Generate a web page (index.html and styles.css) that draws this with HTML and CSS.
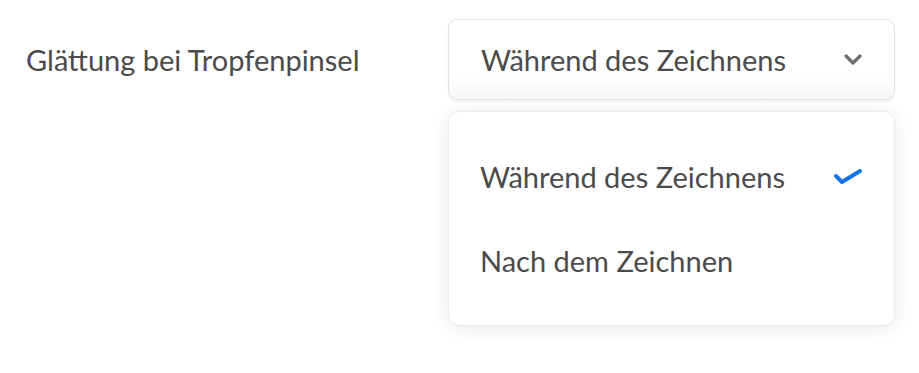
FILE: index.html
```html
<!DOCTYPE html>
<html lang="de">
<head>
<meta charset="utf-8">
<link rel="stylesheet" href="styles.css">
</head>
<body>
<div class="row">
  <div class="label">Glättung bei Tropfenpinsel</div>
  <div class="picker">
    <button class="select">
      <span class="value">Während des Zeichnens</span>
      <svg class="chevron" width="20" height="14" viewBox="0 0 20 14"><path d="M3 3 L10 10 L17 3" fill="none" stroke="#6e6e6e" stroke-width="3.2" stroke-linecap="round" stroke-linejoin="round"/></svg>
    </button>
    <div class="menu">
      <div class="item"><span>Während des Zeichnens</span>
        <svg class="check" width="30" height="22" viewBox="0 0 30 22"><path d="M3 11 L9 17 L27 6" fill="none" stroke="#1473e6" stroke-width="4" stroke-linecap="round" stroke-linejoin="round"/></svg>
      </div>
      <div class="item"><span>Nach dem Zeichnen</span></div>
    </div>
  </div>
</div>
</body>
</html>
```
FILE: styles.css
```css
html, body {
  margin: 0;
  padding: 0;
  background: #ffffff;
}
body {
  font-family: Lato, "Open Sans", sans-serif;
  color: #4b4b4b;
  width: 919px;
  height: 373px;
  overflow: hidden;
}
.row {
  display: flex;
  align-items: flex-start;
  padding-top: 19px;
}
.label {
  width: 422px;
  padding-left: 26px;
  height: 81px;
  line-height: 81px;
  font-size: 29px;
}
.picker {
  position: relative;
  width: 447px;
}
.select {
  box-sizing: border-box;
  width: 447px;
  height: 81px;
  display: flex;
  align-items: center;
  justify-content: space-between;
  padding: 0 31px 0 32px;
  border: 1.5px solid #e3e3e3;
  border-radius: 9px;
  background: linear-gradient(#ffffff 70%, #f6f6f6);
  box-shadow: 0 2px 3px rgba(0,0,0,0.05);
  font: inherit;
  font-size: 29px;
  color: #4b4b4b;
}
.menu {
  position: absolute;
  top: 93px;
  left: 1px;
  width: 445px;
  height: 213px;
  box-sizing: border-box;
  padding: 22px 0 23px;
  background: #fff;
  border-radius: 10px;
  box-shadow: 0 2px 18px rgba(0,0,0,0.10), 0 0 0 1px rgba(0,0,0,0.03);
}
.item {
  height: 84px;
  display: flex;
  align-items: center;
  justify-content: space-between;
  padding: 0 31px 0 31px;
  font-size: 29px;
}
```
